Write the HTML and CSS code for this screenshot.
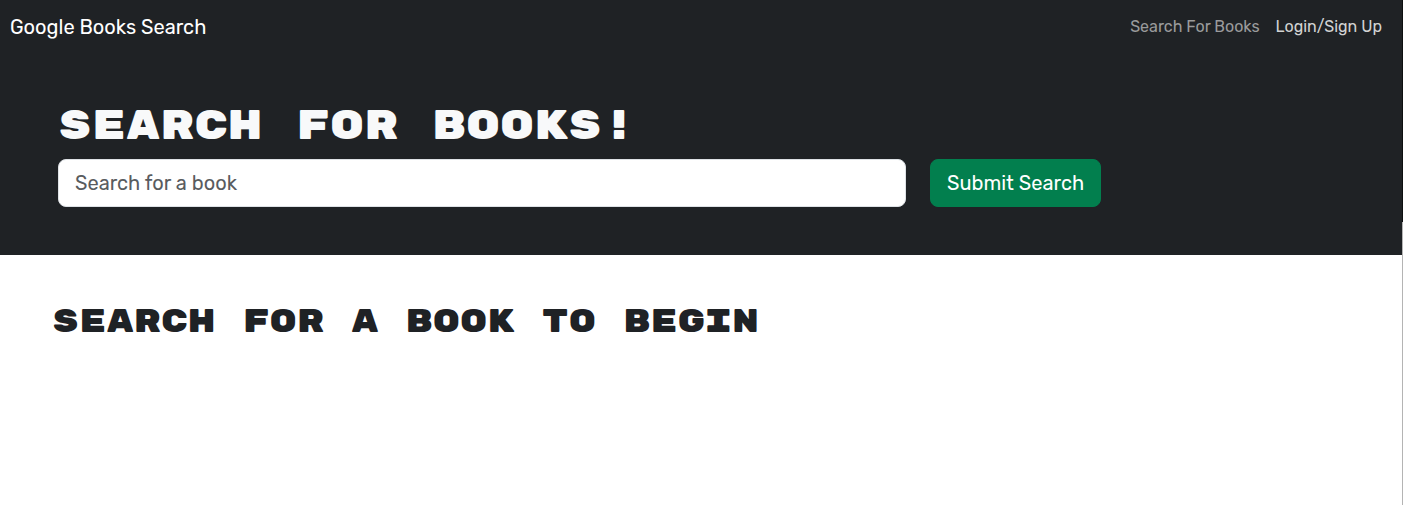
FILE: index.html
```html
<!DOCTYPE html>
<html lang="en">
<head>
<meta charset="utf-8">
<meta name="viewport" content="width=device-width, initial-scale=1">
<title>Google Books Search</title>
<link rel="stylesheet" href="styles.css">
</head>
<body>
<nav class="navbar">
  <a class="brand" href="#">Google Books Search</a>
  <div class="links">
    <a class="link" href="#">Search For Books</a>
    <a class="link link-bright" href="#">Login/Sign Up</a>
  </div>
</nav>
<header class="hero">
  <h1 class="hero-title">SEARCH FOR BOOKS!</h1>
  <form class="search">
    <input class="field" type="text" placeholder="Search for a book" aria-label="Search for a book">
    <button class="submit" type="button">Submit Search</button>
  </form>
</header>
<main class="results">
  <h2 class="results-title">SEARCH FOR A BOOK TO BEGIN</h2>
</main>
<div class="edge" aria-hidden="true"></div>
</body>
</html>
```
FILE: styles.css
```css
* { box-sizing: border-box; }
body {
  margin: 0;
  background: #fff;
  color: #1f2225;
  font-family: Rubik, Roboto, "Liberation Sans", sans-serif;
}
.navbar {
  display: flex;
  align-items: center;
  justify-content: space-between;
  padding: 12px 21px 12px 10px;
  background: #1f2225;
}
.brand {
  color: #fff;
  font-size: 20px;
  line-height: 30px;
  text-decoration: none;
}
.links { display: flex; gap: 16px; }
.link {
  color: #9a9b9c;
  font-size: 16px;
  line-height: 24px;
  text-decoration: none;
}
.link-bright { color: #d2d3d3; }
.hero {
  padding: 49px 60px 48px 58px;
  background: #1f2225;
}
.hero-title, .results-title {
  margin: 0;
  font-family: "Rubik Mono One", "DejaVu Sans", sans-serif;
  font-weight: 500;
}
.hero-title {
  margin-bottom: 8px;
  color: #f8f9fa;
  font-size: 40px;
  line-height: 48px;
}
.search {
  display: grid;
  grid-template-columns: 66% auto;
  justify-content: start;
  gap: 24px;
}
.field, .submit {
  height: 48px;
  padding: 8px 16px;
  border-radius: 8px;
  font-family: inherit;
  font-size: 20px;
  line-height: 30px;
}
.field {
  border: 1px solid #dee2e6;
  background: #fff;
  color: #1f2225;
}
.field::placeholder { color: #595c5f; opacity: 1; }
.submit {
  border: 1px solid #027f4e;
  background: #027f4e;
  color: #fff;
}
.results { padding: 48px 52px; }
.results-title {
  font-size: 32px;
  line-height: 38px;
}
.edge {
  position: fixed;
  top: 0;
  right: 0;
  bottom: 0;
  width: 1px;
  background: linear-gradient(#0d0f10 44%, #b4b4b4 44%);
}
```
